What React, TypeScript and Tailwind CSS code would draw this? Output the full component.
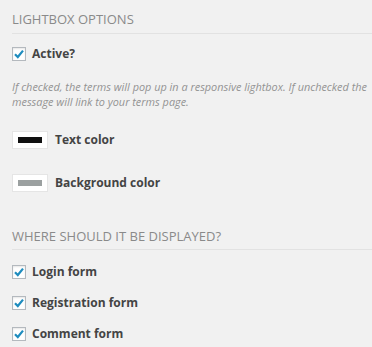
import React from "react";

const Check = () => (
  <span className="flex h-[14px] w-[14px] shrink-0 items-center justify-center border border-[#b4b9be] bg-white shadow-[inset_0_1px_2px_rgba(0,0,0,0.1)]">
    <svg width="12" height="12" viewBox="0 0 12 12">
      <path d="M2 6.2 L4.8 9 L10 2.6" fill="none" stroke="#1e8cbe" strokeWidth="2.2" />
    </svg>
  </span>
);

const CheckRow = ({ label }: { label: string }) => (
  <div className="flex h-[14px] items-center gap-[6px]">
    <Check />
    <span className="text-[12px] font-bold text-[#444]">{label}</span>
  </div>
);

const Swatch = ({ color, label }: { color: string; label: string }) => (
  <div className="flex items-center gap-[7px]">
    <span className="flex h-[18px] w-[36px] items-center justify-center border border-[#e5e5e5] bg-white">
      <span className="h-[6px] w-[24px]" style={{ background: color }} />
    </span>
    <span className="text-[12px] font-bold text-[#444]">{label}</span>
  </div>
);

export default function App() {
  return (
    <div
      className="min-h-[347px] w-[372px] overflow-hidden bg-[#f1f1f1] pl-[12px]"
      style={{ fontFamily: '"Open Sans", "Noto Sans", sans-serif' }}
    >
      <div className="pt-[12px]">
        <div className="text-[13px] leading-[14px] text-[#8a8a8a]">LIGHTBOX OPTIONS</div>
        <div className="mt-[7px] border-b border-[#e2e2e2]" />
      </div>
      <div className="mt-[13px]">
        <CheckRow label="Active?" />
      </div>
      <p className="mt-[18px] pr-0 text-[10.9px] italic leading-[15px] text-[#939393] whitespace-nowrap">
        If checked, the terms will pop up in a responsive lightbox. If unchecked the
        <br />
        message will link to your terms page.
      </p>
      <div className="mt-[22px]">
        <Swatch color="#111" label="Text color" />
      </div>
      <div className="mt-[25px]">
        <Swatch color="#9ba0a0" label="Background color" />
      </div>
      <div className="mt-[37px]">
        <div className="text-[13px] leading-[14px] text-[#8a8a8a]">WHERE SHOULD IT BE DISPLAYED?</div>
        <div className="mt-[6px] border-b border-[#e2e2e2]" />
      </div>
      <div className="mt-[15px] flex flex-col gap-[17px]">
        <CheckRow label="Login form" />
        <CheckRow label="Registration form" />
        <CheckRow label="Comment form" />
      </div>
    </div>
  );
}
